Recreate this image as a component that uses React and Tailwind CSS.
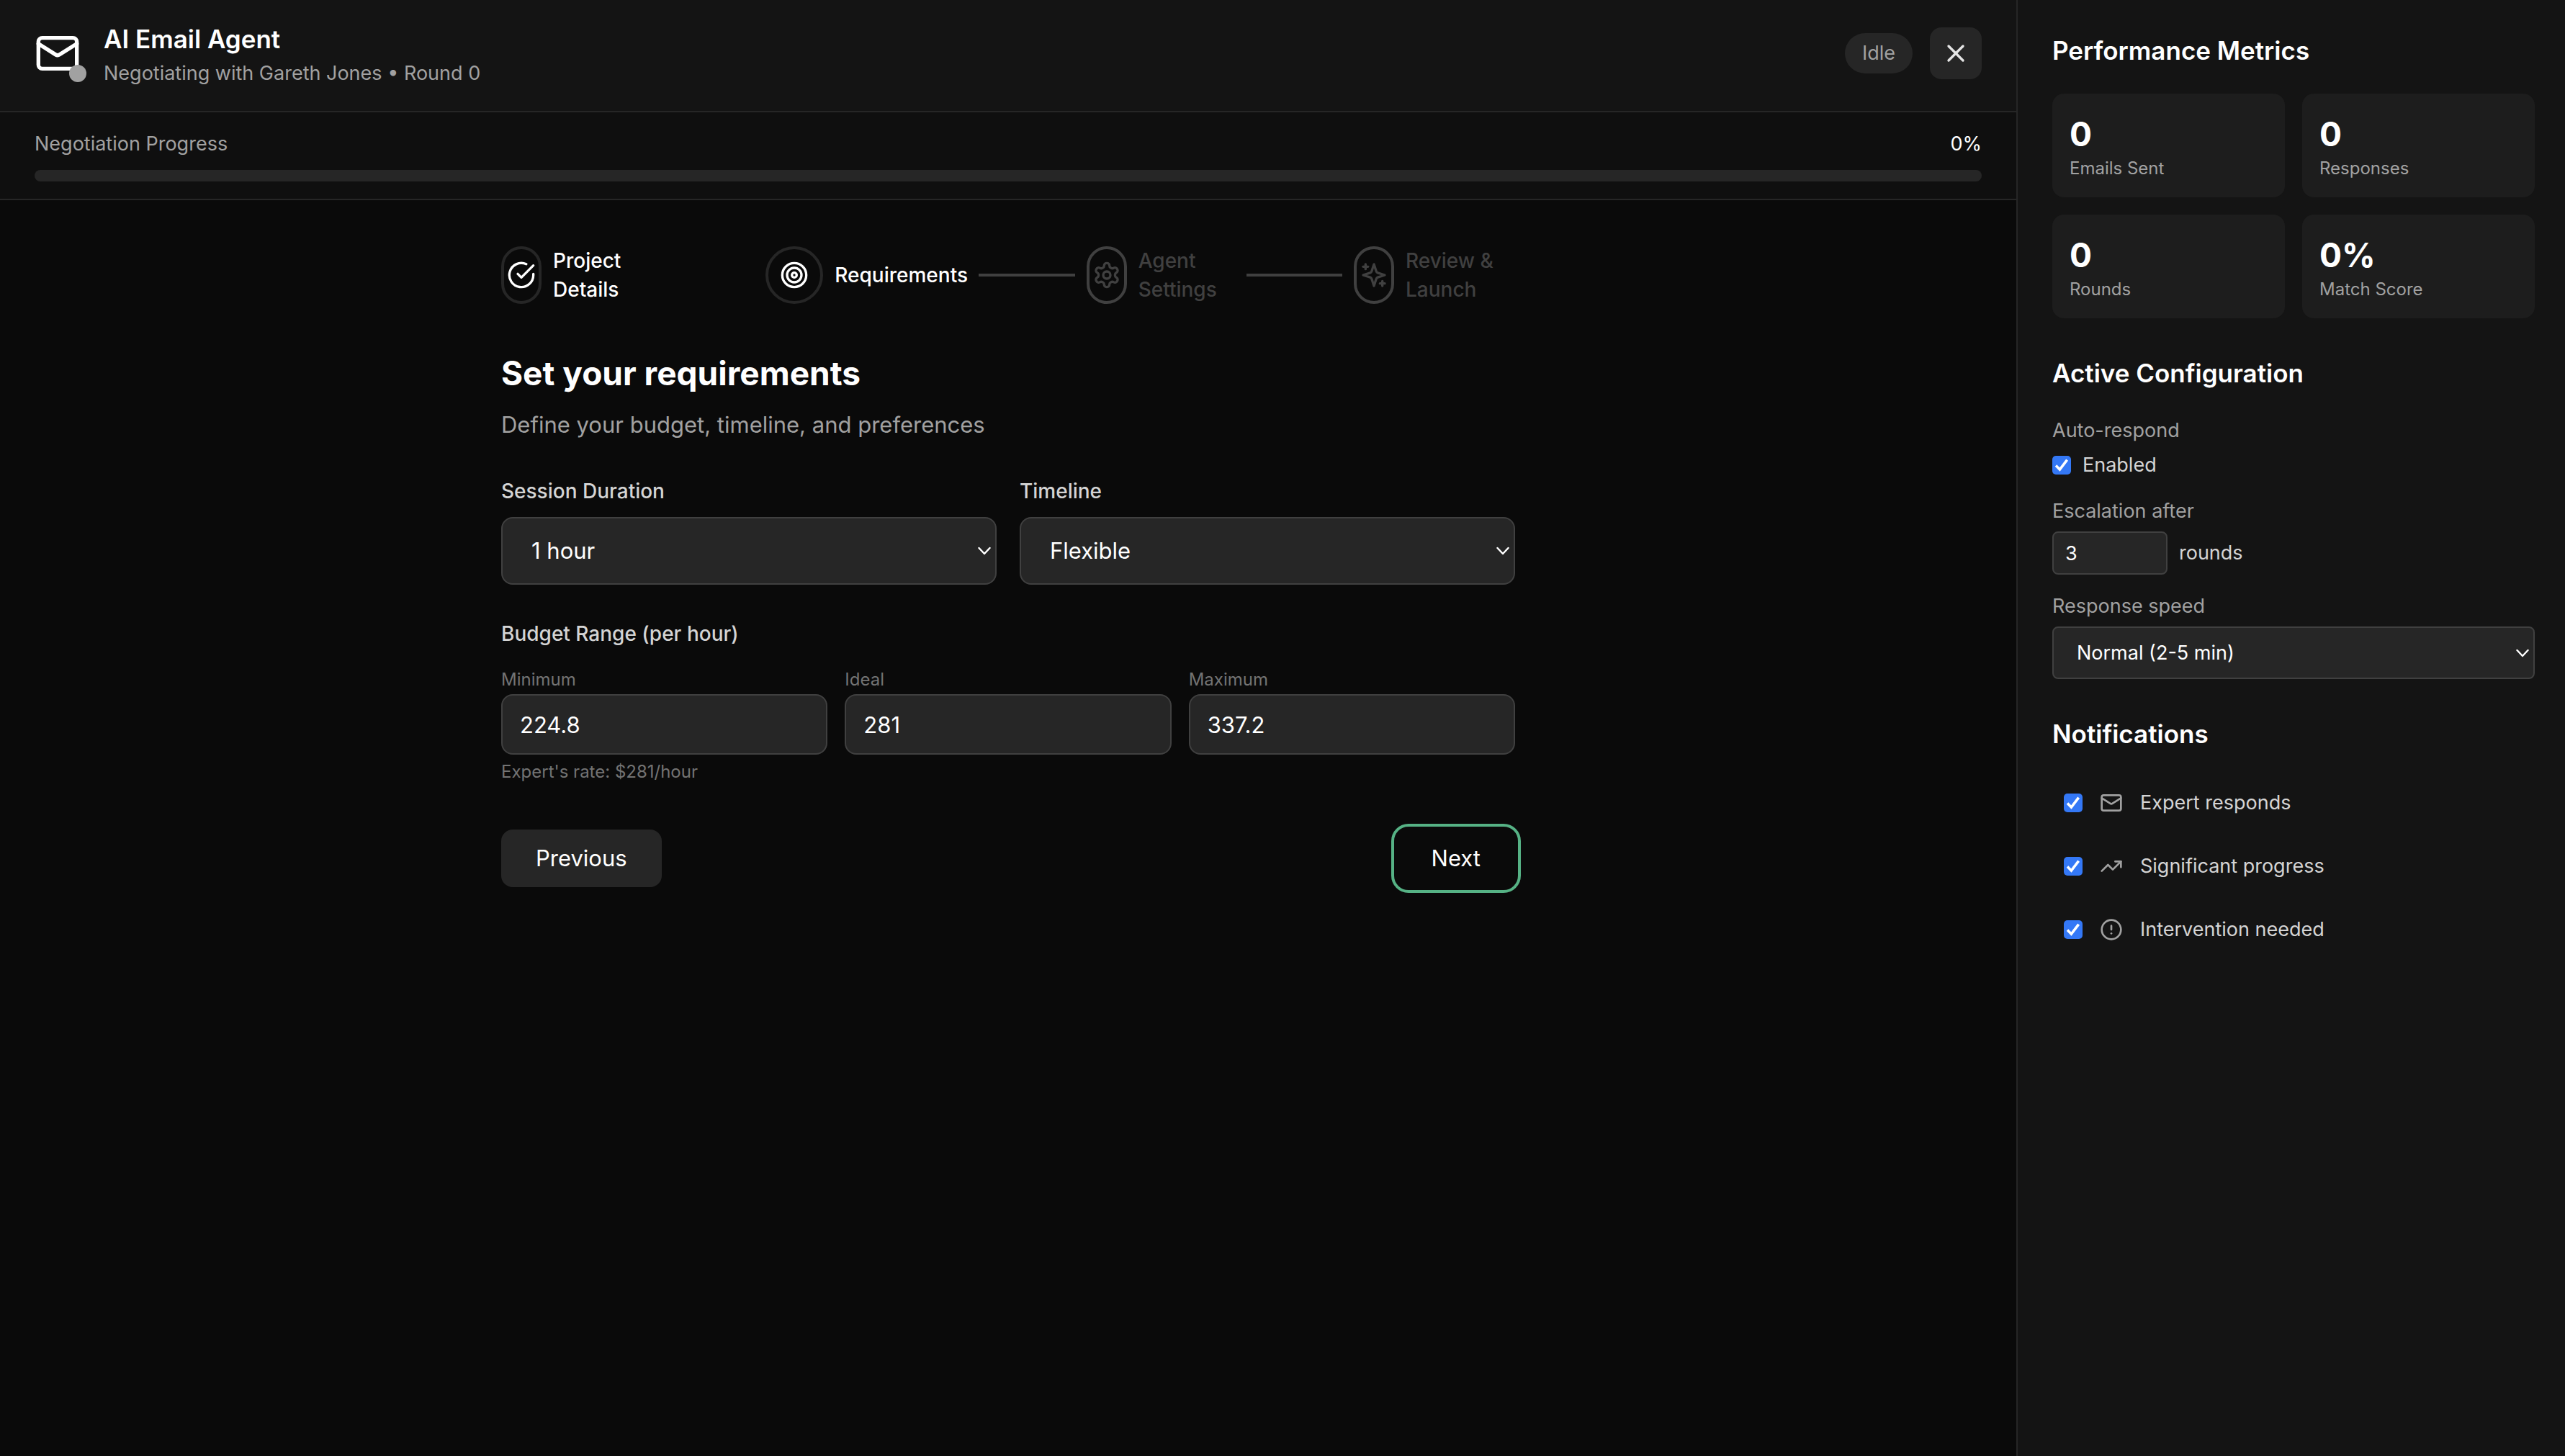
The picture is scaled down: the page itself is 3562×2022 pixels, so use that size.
import { CircleAlert, Target, TrendingUp, X } from "lucide-react";

const metrics = [
  { label: "Emails Sent", value: "0" },
  { label: "Responses", value: "0" },
  { label: "Rounds", value: "0" },
  { label: "Match Score", value: "0%" }
];

const budgets = [
  { id: "budget-min", label: "Minimum", value: "224.8" },
  { id: "budget-ideal", label: "Ideal", value: "281" },
  { id: "budget-max", label: "Maximum", value: "337.2" }
];

const steps = [
  { label: "Project Details", icon: CheckCircleIcon, reached: true, shape: "w-14", labelWidth: "w-[130px]" },
  { label: "Requirements", icon: Target, reached: true, shape: "w-20", labelWidth: "w-[184px]" },
  { label: "Agent Settings", icon: GearIcon, reached: false, shape: "w-14", labelWidth: "w-[134px]" },
  { label: "Review & Launch", icon: SparklesIcon, reached: false, shape: "w-14", labelWidth: "w-[152px]" }
];

const notifications = [
  { id: "notify-responds", label: "Expert responds", icon: MailIcon },
  { id: "notify-progress", label: "Significant progress", icon: TrendingUp },
  { id: "notify-intervention", label: "Intervention needed", icon: CircleAlert }
];

function Icon({ className, children }) {
  return (
    <svg
      className={className}
      viewBox="0 0 24 24"
      fill="none"
      stroke="currentColor"
      strokeWidth="2"
      strokeLinecap="round"
      strokeLinejoin="round"
      aria-hidden="true"
    >
      {children}
    </svg>
  );
}

function MailIcon({ className }) {
  return (
    <Icon className={className}>
      <rect width="20" height="16" x="2" y="4" rx="2" />
      <path d="m22 7-8.97 5.7a1.94 1.94 0 0 1-2.06 0L2 7" />
    </Icon>
  );
}

function CheckCircleIcon({ className }) {
  return (
    <Icon className={className}>
      <path d="M22 11.08V12a10 10 0 1 1-5.93-9.14" />
      <path d="m9 11 3 3L22 4" />
    </Icon>
  );
}

function GearIcon({ className }) {
  return (
    <Icon className={className}>
      <path d="M12.22 2h-.44a2 2 0 0 0-2 2v.18a2 2 0 0 1-1 1.73l-.43.25a2 2 0 0 1-2 0l-.15-.08a2 2 0 0 0-2.73.73l-.22.38a2 2 0 0 0 .73 2.73l.15.1a2 2 0 0 1 1 1.72v.51a2 2 0 0 1-1 1.74l-.15.09a2 2 0 0 0-.73 2.73l.22.38a2 2 0 0 0 2.73.73l.15-.08a2 2 0 0 1 2 0l.43.25a2 2 0 0 1 1 1.73V20a2 2 0 0 0 2 2h.44a2 2 0 0 0 2-2v-.18a2 2 0 0 1 1-1.73l.43-.25a2 2 0 0 1 2 0l.15.08a2 2 0 0 0 2.73-.73l.22-.39a2 2 0 0 0-.73-2.73l-.15-.08a2 2 0 0 1-1-1.74v-.5a2 2 0 0 1 1-1.74l.15-.09a2 2 0 0 0 .73-2.73l-.22-.38a2 2 0 0 0-2.73-.73l-.15.08a2 2 0 0 1-2 0l-.43-.25a2 2 0 0 1-1-1.73V4a2 2 0 0 0-2-2z" />
      <circle cx="12" cy="12" r="3" />
    </Icon>
  );
}

function SparklesIcon({ className }) {
  return (
    <Icon className={className}>
      <path d="m12 3-1.912 5.813a2 2 0 0 1-1.275 1.275L3 12l5.813 1.912a2 2 0 0 1 1.275 1.275L12 21l1.912-5.813a2 2 0 0 1 1.275-1.275L21 12l-5.813-1.912a2 2 0 0 1-1.275-1.275L12 3Z" />
      <path d="M5 3v4" />
      <path d="M19 17v4" />
      <path d="M3 5h4" />
      <path d="M17 19h4" />
    </Icon>
  );
}

function Checkbox({ id }) {
  return (
    <span className="relative flex size-[26px] shrink-0">
      <input
        id={id}
        type="checkbox"
        defaultChecked
        className="peer size-[26px] appearance-none rounded-[5px] border-2 border-neutral-500 checked:border-0 checked:bg-[#3478f6]"
      />
      <svg
        className="pointer-events-none absolute inset-0 hidden size-[26px] text-white peer-checked:block"
        viewBox="0 0 26 26"
        fill="none"
        stroke="currentColor"
        strokeWidth="3.6"
        aria-hidden="true"
      >
        <path d="M5 13.6 10.4 19 20.6 5.6" />
      </svg>
    </span>
  );
}

function Select({ id, options, className }) {
  return (
    <div className="relative">
      <select
        id={id}
        className={`w-full appearance-none border-2 border-neutral-700 bg-neutral-800 text-white ${className}`}
      >
        {options.map((option) => (
          <option key={option}>{option}</option>
        ))}
      </select>
      <svg
        className="pointer-events-none absolute inset-y-0 right-2 my-auto h-3 w-[18px] text-white"
        viewBox="0 0 18 12"
        fill="none"
        stroke="currentColor"
        strokeWidth="2.4"
        strokeLinecap="round"
        strokeLinejoin="round"
        aria-hidden="true"
      >
        <path d="m1.5 2 7.5 8 7.5-8" />
      </svg>
    </div>
  );
}

function Header() {
  return (
    <header className="flex items-center justify-between border-b-2 border-neutral-800 bg-[#141414] px-12 pt-[26px] pb-8">
      <div className="flex items-center gap-8">
        <div className="relative">
          <MailIcon className="size-16 text-white" />
          <span className="absolute -right-2 -bottom-2 size-6 rounded-full bg-neutral-400" />
        </div>
        <div>
          <h1 className="text-[35px] leading-[56px] font-semibold text-white">AI Email Agent</h1>
          <p className="text-[27px] leading-10 text-neutral-400">Negotiating with Gareth Jones • Round 0</p>
        </div>
      </div>
      <div className="flex items-center gap-6">
        <span className="rounded-full bg-neutral-800 px-6 py-2 text-[27px] leading-10 text-neutral-400">Idle</span>
        <button type="button" aria-label="Close" className="rounded-2xl bg-neutral-800 p-4 text-neutral-200">
          <X className="size-10" />
        </button>
      </div>
    </header>
  );
}

function Progress() {
  return (
    <section className="border-b-2 border-neutral-800 bg-[#0f0f0f] px-12 py-6">
      <div className="mb-4 flex justify-between text-[27px] leading-10">
        <span className="text-neutral-400">Negotiation Progress</span>
        <span className="text-white">0%</span>
      </div>
      <div className="h-4 rounded-full bg-neutral-800" />
    </section>
  );
}

function Stepper() {
  return (
    <ol className="flex items-center gap-4">
      {steps.map((step, index) => {
        const StepIcon = step.icon;
        const last = index === steps.length - 1;
        return (
          <li key={step.label} className={last ? "flex items-center gap-4" : "flex flex-1 basis-auto items-center gap-4"}>
            <span
              className={`flex h-20 shrink-0 items-center justify-center rounded-full border-4 ${step.shape} ${
                step.reached ? "border-neutral-800 text-white" : "border-neutral-700 text-neutral-700"
              }`}
            >
              <StepIcon className="size-10 shrink-0" />
            </span>
            <span
              className={`shrink-0 text-[28px] leading-10 font-medium ${step.labelWidth} ${
                step.reached ? "text-white" : "text-neutral-700"
              }`}
            >
              {step.label}
            </span>
            {!last && <span className={`h-1 flex-1 ${index === 0 ? "bg-transparent" : "bg-neutral-700"}`} />}
          </li>
        );
      })}
    </ol>
  );
}

function RequirementsForm() {
  return (
    <form className="mt-16">
      <h2 className="text-[46px] leading-[64px] font-bold text-white">Set your requirements</h2>
      <p className="mt-4 text-[31px] leading-[48px] text-neutral-400">Define your budget, timeline, and preferences</p>

      <div className="mt-12 grid grid-cols-2 gap-8">
        <div>
          <label htmlFor="duration" className="mb-4 block text-[28px] leading-10 font-medium text-neutral-300">
            Session Duration
          </label>
          <Select id="duration" options={["1 hour", "2 hours"]} className="h-[94px] rounded-2xl px-10 text-[31px]" />
        </div>
        <div>
          <label htmlFor="timeline" className="mb-4 block text-[28px] leading-10 font-medium text-neutral-300">
            Timeline
          </label>
          <Select id="timeline" options={["Flexible", "Urgent"]} className="h-[94px] rounded-2xl px-10 text-[31px]" />
        </div>
      </div>

      <fieldset className="mt-12">
        <legend className="text-[28px] leading-10 font-medium text-neutral-300">Budget Range (per hour)</legend>
        <div className="mt-7 grid grid-cols-3 gap-6">
          {budgets.map((budget) => (
            <div key={budget.id}>
              <label htmlFor={budget.id} className="mb-1 block text-[24px] leading-8 text-neutral-500">
                {budget.label}
              </label>
              <input
                id={budget.id}
                type="text"
                inputMode="decimal"
                defaultValue={budget.value}
                className="block h-[84px] w-full rounded-2xl border-2 border-neutral-700 bg-neutral-800 px-6 text-[31px] text-white"
              />
            </div>
          ))}
        </div>
      </fieldset>
      <p className="mt-2 text-[24px] leading-8 text-neutral-500">Expert's rate: $281/hour</p>

      <div className="mt-16 flex justify-between text-[31px] leading-[48px] text-white">
        <button type="button" className="rounded-2xl bg-neutral-800 px-12 py-4">
          Previous
        </button>
        <button type="button" className="rounded-2xl px-12 py-4 outline-4 outline-offset-4 outline-[#56b285]">
          Next
        </button>
      </div>
    </form>
  );
}

function Sidebar() {
  return (
    <aside className="w-[762px] shrink-0 border-l-2 border-neutral-800 bg-[#141414] pt-[42px] pr-[42px] pb-12 pl-12">
      <h2 className="text-[35px] leading-[56px] font-semibold text-white">Performance Metrics</h2>
      <div className="mt-8 grid grid-cols-2 gap-6">
        {metrics.map((metric) => (
          <div key={metric.label} className="rounded-2xl bg-[#1d1d1d] p-6">
            <div className="text-[46px] leading-[64px] font-bold text-white">{metric.value}</div>
            <div className="text-[24px] leading-8 text-neutral-400">{metric.label}</div>
          </div>
        ))}
      </div>

      <h2 className="mt-12 text-[35px] leading-[56px] font-semibold text-white">Active Configuration</h2>
      <div className="mt-8 flex flex-col gap-6 text-[27px] leading-10">
        <div>
          <div className="text-neutral-400">Auto-respond</div>
          <label htmlFor="auto-respond" className="mt-2 flex items-center gap-4 text-neutral-300">
            <Checkbox id="auto-respond" />
            Enabled
          </label>
        </div>
        <div>
          <label htmlFor="escalation" className="block text-neutral-400">
            Escalation after
          </label>
          <div className="mt-2 flex items-center gap-4 text-neutral-300">
            <input
              id="escalation"
              type="text"
              inputMode="numeric"
              defaultValue="3"
              className="h-[60px] w-40 rounded-lg border-2 border-neutral-700 bg-neutral-800 px-4 text-white"
            />
            <span>rounds</span>
          </div>
        </div>
        <div>
          <label htmlFor="speed" className="mb-2 block text-neutral-400">
            Response speed
          </label>
          <Select id="speed" options={["Normal (2-5 min)", "Fast (under 1 min)"]} className="h-[73px] rounded-lg px-8" />
        </div>
      </div>

      <h2 className="mt-12 text-[35px] leading-[56px] font-semibold text-white">Notifications</h2>
      <div className="mt-8 flex flex-col gap-4">
        {notifications.map((item) => {
          const ItemIcon = item.icon;
          return (
            <label
              key={item.id}
              htmlFor={item.id}
              className="flex items-center gap-6 p-4 text-[27px] leading-10 text-neutral-300"
            >
              <Checkbox id={item.id} />
              <ItemIcon className="size-8 shrink-0 text-neutral-400" />
              {item.label}
            </label>
          );
        })}
      </div>
    </aside>
  );
}

export default function App() {
  return (
    <div className="flex min-h-screen bg-neutral-950 font-['Inter',sans-serif]">
      <div className="min-w-0 flex-1">
        <Header />
        <Progress />
        <main className="mx-auto max-w-[1536px] p-16">
          <Stepper />
          <RequirementsForm />
        </main>
      </div>
      <Sidebar />
    </div>
  );
}
